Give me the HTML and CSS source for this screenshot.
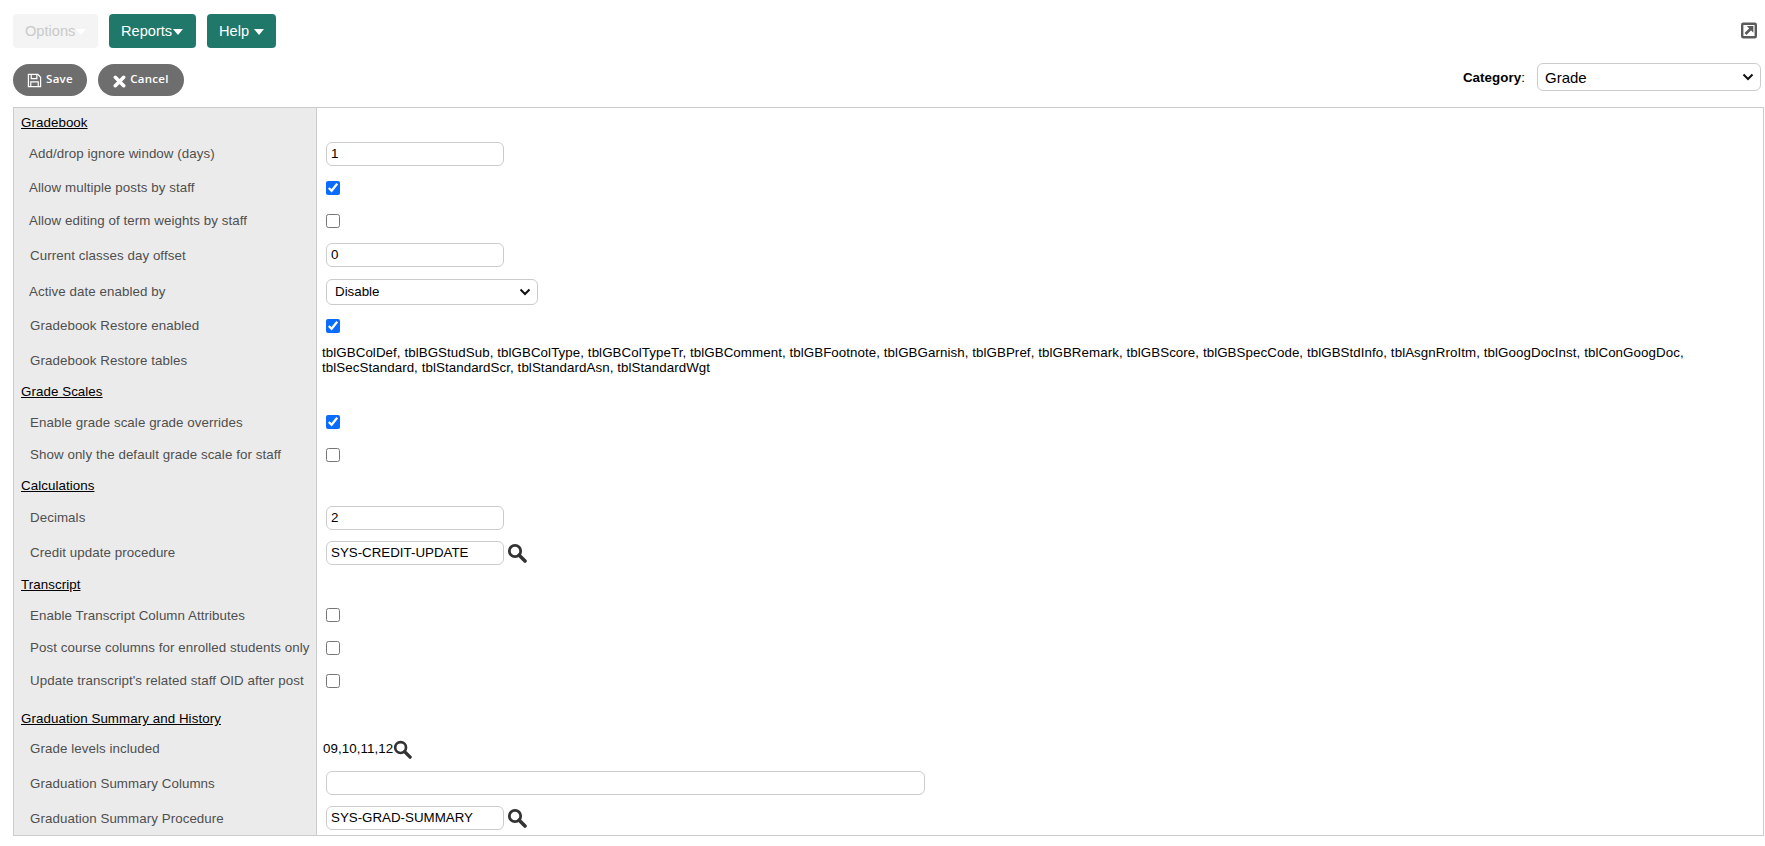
FILE: index.html
```html
<!DOCTYPE html>
<html lang="en">
<head>
<meta charset="utf-8">
<title>Preferences</title>
<link rel="stylesheet" href="styles.css">
</head>
<body>
<svg class="defs" width="0" height="0" aria-hidden="true">
  <symbol id="search" viewBox="0 0 20 20">
    <circle cx="8" cy="8" r="5.700" fill="none" stroke="#333" stroke-width="2.800"/>
    <path d="M12.200 12.200 18 18" stroke="#333" stroke-width="3.600" stroke-linecap="round"/>
  </symbol>
</svg>
<div class="menubar">
  <div class="menus">
    <button class="menu disabled">Options<span class="caret"></span></button>
    <button class="menu">Reports<span class="caret"></span></button>
    <button class="menu help">Help <span class="caret"></span></button>
  </div>
  <svg class="popout" viewBox="0 0 16 16" width="16" height="17">
    <rect x="1.200" y="1.200" width="13.600" height="13.600" rx="1" fill="none" stroke="#5a5a5a" stroke-width="2.400"/>
    <path d="M4.500 11.500 10 6" fill="none" stroke="#5a5a5a" stroke-width="2.600"/>
    <path d="M5.800 3.600h6.600V10.200z" fill="#5a5a5a"/>
  </svg>
</div>
<div class="actionbar">
  <div class="actions">
    <button class="pill save">
      <svg viewBox="0 0 16 16" width="15" height="15"><path d="M1.500 1.500h10l3 3v10h-13z" fill="none" stroke="#fff" stroke-width="1.300"/><path d="M4.500 2v4h6V2M4 14V9.500h8V14" fill="none" stroke="#fff" stroke-width="1.300"/></svg>
      <span>Save</span>
    </button>
    <button class="pill cancel">
      <svg class="x" viewBox="0 0 14 14" width="13" height="13"><path d="M2.500 2.500 11.500 11.500M11.500 2.500 2.500 11.500" stroke="#fff" stroke-width="3.800" stroke-linecap="round"/></svg>
      <span>Cancel</span>
    </button>
  </div>
  <div class="category">
    <label><b>Category</b>:</label>
    <select class="field cat-select"><option>Grade</option></select>
  </div>
</div>
<table class="prefs">
  <tbody>
    <tr class="h29"><th class="section"><u>Gradebook</u></th><td></td></tr>
    <tr class="h34"><th class="lbl nudge">Add/drop ignore window (days)</th><td><input class="field short" value="1"></td></tr>
    <tr class="h34"><th class="lbl nudge">Allow multiple posts by staff</th><td><input type="checkbox" class="chk" checked></td></tr>
    <tr class="h32"><th class="lbl nudge">Allow editing of term weights by staff</th><td><input type="checkbox" class="chk"></td></tr>
    <tr class="h36"><th class="lbl drop">Current classes day offset</th><td><input class="field short" value="0"></td></tr>
    <tr class="h38"><th class="lbl nudge">Active date enabled by</th><td><select class="field dis-select"><option>Disable</option></select></td></tr>
    <tr class="h30"><th class="lbl">Gradebook Restore enabled</th><td><input type="checkbox" class="chk" checked></td></tr>
    <tr class="h38"><th class="lbl drop">Gradebook Restore tables</th><td class="text">tblGBColDef, tblBGStudSub, tblGBColType, tblGBColTypeTr, tblGBComment, tblGBFootnote, tblGBGarnish, tblGBPref, tblGBRemark, tblGBScore, tblGBSpecCode, tblGBStdInfo, tblAsgnRroItm, tblGoogDocInst, tblConGoogDoc, tblSecStandard, tblStandardScr, tblStandardAsn, tblStandardWgt</td></tr>
    <tr class="h25"><th class="section"><u>Grade Scales</u></th><td></td></tr>
    <tr class="h36"><th class="lbl drop">Enable grade scale grade overrides</th><td><input type="checkbox" class="chk" checked></td></tr>
    <tr class="h30"><th class="lbl">Show only the default grade scale for staff</th><td><input type="checkbox" class="chk"></td></tr>
    <tr class="h31"><th class="section"><u>Calculations</u></th><td></td></tr>
    <tr class="h34"><th class="lbl">Decimals</th><td><input class="field short" value="2"></td></tr>
    <tr class="h36"><th class="lbl">Credit update procedure</th><td><div class="picker"><input class="field short" value="SYS-CREDIT-UPDATE"><svg class="mag"><use href="#search"/></svg></div></td></tr>
    <tr class="h26"><th class="section drop"><u>Transcript</u></th><td></td></tr>
    <tr class="h36"><th class="lbl drop">Enable Transcript Column Attributes</th><td><input type="checkbox" class="chk"></td></tr>
    <tr class="h30"><th class="lbl">Post course columns for enrolled students only</th><td><input type="checkbox" class="chk"></td></tr>
    <tr class="h36"><th class="lbl">Update transcript's related staff OID after post</th><td><input type="checkbox" class="chk"></td></tr>
    <tr class="h36"><th class="section drop2"><u>Graduation Summary and History</u></th><td></td></tr>
    <tr class="h30 lift"><th class="lbl">Grade levels included</th><td class="text levels"><div class="picker tight"><span>09,10,11,12</span><svg class="mag small"><use href="#search"/></svg></div></td></tr>
    <tr class="h36"><th class="lbl drop">Graduation Summary Columns</th><td><input class="field long"></td></tr>
    <tr class="h35"><th class="lbl drop">Graduation Summary Procedure</th><td><div class="picker"><input class="field short" value="SYS-GRAD-SUMMARY"><svg class="mag"><use href="#search"/></svg></div></td></tr>
  </tbody>
</table>
</body>
</html>
```
FILE: styles.css
```css
* { box-sizing: border-box; }
html, body { margin: 0; height: 100%; overflow: hidden; }
body { background: #fff; color: #000; font: 13.333px/15px "Liberation Sans", Arial, sans-serif; letter-spacing: .07px; }
.defs { position: absolute; }
button { font-family: inherit; border: 0; cursor: pointer; }

.menubar { display: flex; justify-content: space-between; align-items: flex-start; padding: 14px 8px 0 13px; }
.menus { display: flex; gap: 11px; }
.menu { width: 87px; height: 34px; padding: 0 0 1px 12px; background: #20786b; color: #fff; font-size: 14.600px; border-radius: 4px; display: flex; align-items: center; }
.menu.disabled { background: #f4f4f4; color: #c9c9c9; width: 85px; }
.menu.help { width: 69px; }
.caret { display: inline-block; width: 0; height: 0; margin: 3px 0 0 1px; border: 5px solid transparent; border-top: 6px solid #fff; border-bottom: 0; }
.help .caret { margin-left: 5px; }
.popout { margin-top: 8px; }

.actionbar { display: flex; justify-content: space-between; align-items: flex-start; height: 32px; margin-top: 16px; padding: 0 4px 0 13px; }
.actions { display: flex; gap: 11px; }
.pill { height: 32px; display: flex; align-items: center; justify-content: center; gap: 4px; border-radius: 16px; background: #6e6e6e; color: #fff; font: 600 11.500px "Open Sans", sans-serif; letter-spacing: .3px; }
.pill span { position: relative; top: -2px; }
.pill .x { margin-top: 2px; }
.save { width: 74px; }
.cancel { width: 86px; }
.category { display: flex; align-items: center; gap: 12px; margin-top: -1px; }
.field { height: 24px; border: 1px solid #ccc; border-radius: 6px; background: #fff; color: #000; font: 13.333px "Liberation Sans", Arial, sans-serif; padding: 0 4px; outline: 0; display: block; }
select.field { appearance: none; background: #fff url("data:image/svg+xml,%3Csvg xmlns='http://www.w3.org/2000/svg' width='12' height='8'%3E%3Cpath d='M1.500 1.500 6 6l4.500-4.500' fill='none' stroke='%23111' stroke-width='2'/%3E%3C/svg%3E") no-repeat right 6px center; }
.cat-select { width: 224px; height: 28px; padding-left: 7px; font-size: 15px; }
.dis-select { width: 212px; height: 26px; padding-left: 8px; }
.short { width: 178px; }
.long { width: 599px; }

.prefs { width: 1751px; height: 729px; margin: 11px 0 0 13px; border-collapse: collapse; border: 1px solid #ccc; table-layout: fixed; }
.prefs th { width: 303px; padding: 0 0 0 7px; background: #ebebeb; border-right: 1px solid #ccc; text-align: left; font-weight: normal; white-space: nowrap; }
.prefs td { padding: 0 0 0 9px; vertical-align: middle; }
.prefs th.lbl { padding-left: 16px; color: #4f4f4f; }
.prefs th.nudge { padding-left: 15px; }
.prefs th.drop { padding-top: 2px; }
.prefs th.drop2 { padding-top: 4px; }
.prefs td.text { padding-left: 5px; padding-right: 50px; }
.prefs td.levels { padding-left: 6px; }
.lift th.lbl, .lift td.levels { padding-bottom: 3px; }
.h25 { height: 25px; } .h26 { height: 26px; } .h29 { height: 29px; } .h30 { height: 30px; } .h31 { height: 31px; }
.h32 { height: 32px; } .h34 { height: 34px; } .h35 { height: 35px; } .h36 { height: 36px; } .h38 { height: 38px; }
.chk { display: block; width: 14px; height: 14px; margin: 0; accent-color: #0a6cff; }
.picker { display: flex; align-items: center; gap: 3px; }
.picker.tight { gap: 0; }
.mag { width: 20px; height: 20px; }
.mag.small { width: 19px; height: 19px; margin-top: 3px; }
```
